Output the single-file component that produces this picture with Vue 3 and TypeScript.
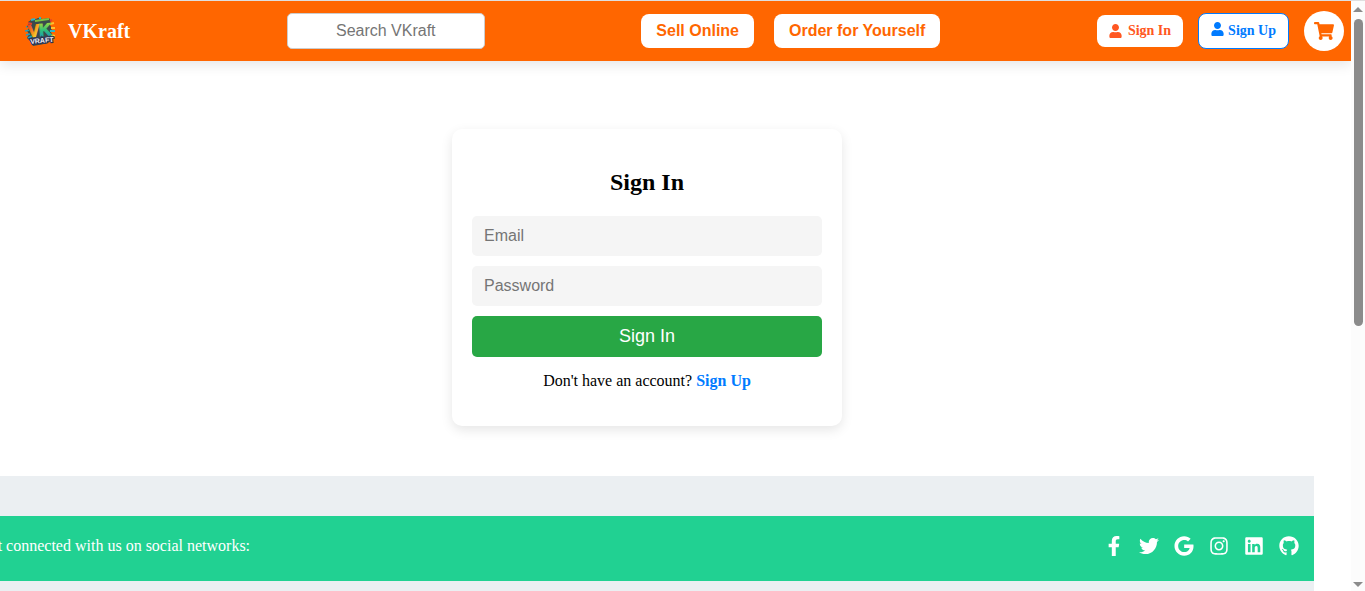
<script setup lang="ts">
import { ref } from 'vue'

interface SocialLink {
  name: string
  viewBox: string
  path: string
}

const search = ref('')
const email = ref('')
const password = ref('')

const userPath =
  'M224 256c70.7 0 128-57.3 128-128S294.7 0 224 0 96 57.3 96 128s57.3 128 128 128zm89.6 32h-16.7c-22.2 10.2-46.9 16-72.9 16s-50.6-5.8-72.9-16h-16.7C60.2 288 0 348.2 0 422.4V464c0 26.5 21.5 48 48 48h352c26.5 0 48-21.5 48-48v-41.6c0-74.2-60.2-134.4-134.4-134.4z'

const socials: SocialLink[] = [
  {
    name: 'Facebook',
    viewBox: '0 0 320 512',
    path: 'M279.14 288l14.22-92.66h-88.91v-60.13c0-25.35 12.42-50.06 52.24-50.06h40.42V6.26S260.43 0 225.36 0c-73.22 0-121.08 44.38-121.08 124.72v70.62H22.89V288h81.39v224h100.17V288z',
  },
  {
    name: 'Twitter',
    viewBox: '0 0 512 512',
    path: 'M459.37 151.716c.325 4.548.325 9.097.325 13.645 0 138.72-105.583 298.558-298.558 298.558-59.452 0-114.68-17.219-161.137-47.106 8.447.974 16.568 1.299 25.34 1.299 49.055 0 94.213-16.568 130.274-44.832-46.132-.975-84.792-31.188-98.112-72.772 6.498.974 12.995 1.624 19.818 1.624 9.421 0 18.843-1.3 27.614-3.573-48.081-9.747-84.143-51.98-84.143-102.985v-1.299c13.969 7.797 30.214 12.67 47.431 13.319-28.264-18.843-46.781-51.005-46.781-87.391 0-19.492 5.197-37.36 14.294-52.954 51.655 63.675 129.3 105.258 216.365 109.807-1.624-7.797-2.599-15.918-2.599-24.04 0-57.828 46.782-104.934 104.934-104.934 30.213 0 57.502 12.67 76.67 33.137 23.715-4.548 46.456-13.32 66.599-25.34-7.798 24.366-24.366 44.833-46.132 57.827 21.117-2.273 41.584-8.122 60.426-16.243-14.292 20.791-32.161 39.308-52.628 54.253z',
  },
  {
    name: 'Google',
    viewBox: '0 0 488 512',
    path: 'M488 261.8C488 403.3 391.1 504 248 504 110.8 504 0 393.2 0 256S110.8 8 248 8c66.8 0 123 24.5 166.3 64.9l-67.5 64.9C258.5 52.6 94.3 116.6 94.3 256c0 86.5 69.1 156.6 153.7 156.6 98.2 0 135-70.4 140.8-106.9H248v-85.3h236.1c2.3 12.7 3.9 24.9 3.9 41.4z',
  },
  {
    name: 'Instagram',
    viewBox: '0 0 448 512',
    path: 'M224.1 141c-63.6 0-114.9 51.3-114.9 114.9s51.3 114.9 114.9 114.9S339 319.5 339 255.9 287.7 141 224.1 141zm0 189.6c-41.1 0-74.7-33.5-74.7-74.7s33.5-74.7 74.7-74.7 74.7 33.5 74.7 74.7-33.6 74.7-74.7 74.7zm146.4-194.3c0 14.9-12 26.8-26.8 26.8-14.9 0-26.8-12-26.8-26.8s12-26.8 26.8-26.8 26.8 12 26.8 26.8zm76.1 27.2c-1.7-35.9-9.9-67.7-36.2-93.9-26.2-26.2-58-34.4-93.9-36.2-37-2.1-147.9-2.1-184.9 0-35.8 1.7-67.6 9.9-93.9 36.1s-34.4 58-36.2 93.9c-2.1 37-2.1 147.9 0 184.9 1.7 35.9 9.9 67.7 36.2 93.9s58 34.4 93.9 36.2c37 2.1 147.9 2.1 184.9 0 35.9-1.7 67.7-9.9 93.9-36.2 26.2-26.2 34.4-58 36.2-93.9 2.1-37 2.1-147.8 0-184.8zM398.8 388c-7.8 19.6-22.9 34.7-42.6 42.6-29.5 11.7-99.5 9-132.1 9s-102.7 2.6-132.1-9c-19.6-7.8-34.7-22.9-42.6-42.6-11.7-29.5-9-99.5-9-132.1s-2.6-102.7 9-132.1c7.8-19.6 22.9-34.7 42.6-42.6 29.5-11.7 99.5-9 132.1-9s102.7-2.6 132.1 9c19.6 7.8 34.7 22.9 42.6 42.6 11.7 29.5 9 99.5 9 132.1s2.7 102.7-9 132.1z',
  },
  {
    name: 'LinkedIn',
    viewBox: '0 0 448 512',
    path: 'M416 32H31.9C14.3 32 0 46.5 0 64.3v383.4C0 465.5 14.3 480 31.9 480H416c17.6 0 32-14.5 32-32.3V64.3c0-17.8-14.4-32.3-32-32.3zM135.4 416H69V202.2h66.5V416zm-33.2-243c-21.3 0-38.5-17.3-38.5-38.5S80.9 96 102.2 96c21.2 0 38.5 17.3 38.5 38.5 0 21.3-17.2 38.5-38.5 38.5zm282.1 243h-66.4V312c0-24.8-.5-56.7-34.5-56.7-34.6 0-39.9 27-39.9 54.9V416h-66.4V202.2h63.7v29.2h.9c8.9-16.8 30.6-34.5 62.9-34.5 67.2 0 79.7 44.3 79.7 101.9V416z',
  },
  {
    name: 'GitHub',
    viewBox: '0 0 496 512',
    path: 'M244.8 8C106.1 8 0 113.3 0 252c0 110.9 69.8 205.8 169.5 239.2 12.8 2.3 17.3-5.6 17.3-12.1 0-6.2-.3-40.4-.3-61.4 0 0-70 15-84.7-29.8 0 0-11.4-29.1-27.8-36.6 0 0-22.9-15.7 1.6-15.4 0 0 24.9 2 38.6 25.8 21.9 38.6 58.6 27.5 72.9 20.9 2.3-16 8.8-27.1 16-33.7-55.9-6.2-112.3-14.3-112.3-110.5 0-27.5 7.6-41.3 23.6-58.9-2.6-6.5-11.1-33.3 2.6-67.9 20.9-6.5 69 27 69 27 20-5.6 41.5-8.5 62.8-8.5s42.8 2.9 62.8 8.5c0 0 48.1-33.6 69-27 13.7 34.7 5.2 61.4 2.6 67.9 16 17.7 25.8 31.5 25.8 58.9 0 96.5-58.9 104.2-114.8 110.5 9.2 7.9 17 22.9 17 46.4 0 33.7-.3 75.4-.3 83.6 0 6.5 4.6 14.4 17.3 12.1C428.2 457.8 496 362.9 496 252 496 113.3 383.5 8 244.8 8z',
  },
]
</script>

<template>
  <div class="window">
    <div class="page">
      <header class="header">
        <a class="brand" href="#">
          <svg class="logo" viewBox="0 0 30 30" aria-hidden="true">
            <defs>
              <linearGradient id="v-fill" x1="0" y1="0" x2="1" y2="1">
                <stop offset="0" stop-color="#e8281c" />
                <stop offset="0.45" stop-color="#f98a1b" />
                <stop offset="0.7" stop-color="#f4d92c" />
                <stop offset="1" stop-color="#5cc653" />
              </linearGradient>
              <linearGradient id="k-fill" x1="0" y1="0" x2="0" y2="1">
                <stop offset="0" stop-color="#c6e02c" />
                <stop offset="0.5" stop-color="#2fc07a" />
                <stop offset="1" stop-color="#1593c9" />
              </linearGradient>
            </defs>
            <path d="M3 6l3-2 5-1 2-1 5 1 6-1 2 3-1 4 2 3-1 4 1 4-2 6-6 2-11 2-3-5-3-3 2-4-2-3 2-3z" fill="#3b4a4c" />
            <path d="M1 11l4-1M0 15l5-1M1 19l4-1M3 22l4-2" stroke="#1e9fc4" stroke-width="1.5" />
            <path d="M25 8l4-1M26 12l4 0M26 19l4 1" stroke="#ffc12e" stroke-width="2" />
            <path d="M25 15l5 0M6 4l4-1M14 2l2 0" stroke="#2bb5c9" stroke-width="2" />
            <path d="M10 5l14-2" stroke="#7fc241" stroke-width="2" />
            <path d="M3 7l4 1M25 5l2-1" stroke="#e5422b" stroke-width="2" />
            <g transform="rotate(-5 15 15)">
              <text class="logo-main" x="3" y="20" fill="url(#v-fill)" stroke="url(#v-fill)">V</text>
              <text class="logo-main" x="14" y="20" fill="url(#k-fill)" stroke="url(#k-fill)">K</text>
              <text class="logo-sub" x="16" y="27" text-anchor="middle">VRAFT</text>
            </g>
          </svg>
          <span>VKraft</span>
        </a>
        <input v-model="search" class="search" type="text" placeholder="Search VKraft" aria-label="Search VKraft" />
        <nav class="nav">
          <button type="button">Sell Online</button>
          <button type="button">Order for Yourself</button>
        </nav>
        <div class="actions">
          <a class="account sign-in" href="#">
            <svg class="user" viewBox="0 0 448 512" aria-hidden="true"><path :d="userPath" /></svg>
            <span>Sign In</span>
          </a>
          <a class="account sign-up" href="#">
            <svg class="user" viewBox="0 0 448 512" aria-hidden="true"><path :d="userPath" /></svg>
            <span>Sign Up</span>
          </a>
          <button class="cart" type="button" aria-label="Cart">
            <svg viewBox="0 0 576 512" aria-hidden="true">
              <path d="M528.12 301.319l47.273-208C578.806 78.301 567.391 64 551.99 64H159.208l-9.166-44.81C147.758 8.021 137.93 0 126.529 0H24C10.745 0 0 10.745 0 24v16c0 13.255 10.745 24 24 24h69.883l70.248 343.435C147.325 417.1 136 435.222 136 456c0 30.928 25.072 56 56 56s56-25.072 56-56c0-15.674-6.447-29.835-16.824-40h209.647C430.447 426.165 424 440.326 424 456c0 30.928 25.072 56 56 56s56-25.072 56-56c0-22.172-12.888-41.332-31.579-50.405l5.517-24.276c3.413-15.018-8.002-29.319-23.403-29.319H218.117l-6.545-32h293.145c11.206 0 20.92-7.754 23.403-18.681z" />
            </svg>
          </button>
        </div>
      </header>

      <div class="content">
        <main class="main">
          <form class="card" @submit.prevent>
            <h2>Sign In</h2>
            <div class="fields">
              <input v-model="email" type="email" placeholder="Email" aria-label="Email" />
              <input v-model="password" type="password" placeholder="Password" aria-label="Password" />
              <button type="submit">Sign In</button>
            </div>
            <p>Don't have an account? <a href="#">Sign Up</a></p>
          </form>
        </main>
        <footer class="footer">
          <section class="social">
            <span>Get connected with us on social networks:</span>
            <div class="social-links">
              <a v-for="item in socials" :key="item.name" href="#" :aria-label="item.name">
                <svg :viewBox="item.viewBox" aria-hidden="true"><path :d="item.path" /></svg>
              </a>
            </div>
          </section>
        </footer>
      </div>
    </div>

    <div class="scrollbar" aria-hidden="true">
      <span class="arrow up"></span>
      <span class="thumb"></span>
      <span class="arrow down"></span>
    </div>
  </div>
</template>

<style>
body {
  margin: 0;
  background: #fff;
}
</style>

<style scoped>
* {
  box-sizing: border-box;
}

.window {
  display: grid;
  grid-template-columns: minmax(0, 1fr) 14px;
  height: 100vh;
  overflow: hidden;
  border-top: 1px solid #dfdfdf;
  font-family: "Liberation Serif", "Times New Roman", serif;
  font-size: 16px;
  color: #000;
}

.page {
  display: flex;
  flex-direction: column;
  min-width: 0;
  overflow: hidden;
}

.header {
  display: flex;
  flex: none;
  align-items: center;
  justify-content: space-between;
  height: 60px;
  padding: 0 7px 0 25px;
  background: #ff6600;
  box-shadow: 0 4px 12px rgba(0, 0, 0, 0.1);
}

.brand {
  display: flex;
  align-items: center;
  gap: 13px;
  color: #fff;
  font-size: 20px;
  font-weight: 700;
  text-decoration: none;
}

.logo {
  width: 30px;
  height: 30px;
}

.logo-main {
  font: 900 17px "Liberation Sans", Arial, sans-serif;
  stroke-width: 1;
}

.logo-sub {
  font: 700 7px "Liberation Sans", Arial, sans-serif;
  fill: #f1eff2;
  stroke: #2b3357;
  stroke-width: 2;
  paint-order: stroke;
}

.search {
  width: 198px;
  height: 36px;
  padding: 0 10px;
  border: 1px solid #ccc;
  border-radius: 5px;
  background: #fff;
  font-family: "Liberation Sans", Arial, sans-serif;
  font-size: 16px;
  text-align: center;
  outline: none;
}

.nav {
  display: flex;
  gap: 20px;
}

.nav button {
  height: 34px;
  padding: 0 15px;
  border: 0;
  border-radius: 8px;
  background: #fff;
  color: #ff6600;
  font-family: "Liberation Sans", Arial, sans-serif;
  font-size: 16px;
  font-weight: 700;
}

.actions {
  display: flex;
  align-items: center;
  gap: 15px;
}

.account {
  display: flex;
  align-items: center;
  border-radius: 8px;
  background: #fff;
  font-size: 14px;
  font-weight: 700;
  text-decoration: none;
}

.sign-in {
  gap: 6px;
  height: 32px;
  padding: 0 12px;
  color: #ff5722;
}

.sign-up {
  gap: 4px;
  height: 36px;
  padding: 0 12px;
  border: 1px solid #007bff;
  color: #007bff;
}

.user {
  width: 13px;
  height: 14px;
  fill: currentColor;
}

.sign-up .user {
  margin-bottom: 4px;
}

.cart {
  display: grid;
  place-items: center;
  width: 40px;
  height: 40px;
  padding: 0;
  border: 0;
  border-radius: 50%;
  background: #fff;
  color: #ff6600;
}

.cart svg {
  width: 20px;
  height: 18px;
  fill: currentColor;
}

.content {
  margin-right: 37px;
}

.main {
  display: flex;
  justify-content: center;
  padding: 68px 20px 50px 0;
}

.card {
  width: 390px;
  padding: 20px;
  border-radius: 10px;
  background: #fff;
  box-shadow: 0 4px 12px rgba(0, 0, 0, 0.1);
  text-align: center;
}

.card h2 {
  margin: 20px 0;
  font-size: 24px;
  line-height: 27px;
}

.fields {
  display: grid;
  gap: 10px;
}

.fields input {
  width: 100%;
  height: 40px;
  padding: 0 12px;
  border: 0;
  border-radius: 5px;
  background: #f5f5f5;
  font-family: "Liberation Sans", Arial, sans-serif;
  font-size: 16px;
  outline: none;
}

.search::placeholder,
.fields input::placeholder {
  color: #757575;
}

.fields button {
  height: 41px;
  border: 0;
  border-radius: 5px;
  background: #28a745;
  color: #fff;
  font-family: "Liberation Sans", Arial, sans-serif;
  font-size: 18px;
}

.card p {
  margin: 15px 0 16px;
  line-height: 18px;
}

.card p a {
  color: #007bff;
  font-weight: 700;
  text-decoration: none;
}

.footer {
  margin-left: -37px;
  padding: 40px 0;
  background: #ebeff2;
}

.social {
  display: flex;
  align-items: center;
  justify-content: space-between;
  height: 65px;
  padding: 0 15px 6px 16px;
  background: #21d192;
  color: #fff;
}

.social-links {
  display: flex;
  gap: 15px;
}

.social-links a {
  display: grid;
  place-items: center;
  width: 20px;
  height: 20px;
  color: #fff;
}

.social-links svg {
  width: 20px;
  height: 20px;
  fill: currentColor;
}

.scrollbar {
  display: flex;
  flex-direction: column;
  align-items: center;
  padding: 6px 0 4px;
  background: #fcfcfc;
}

.arrow {
  border: 5px solid transparent;
}

.up {
  border-top: 0;
  border-bottom-color: #8b8b8b;
}

.down {
  margin-top: auto;
  border-bottom: 0;
  border-top-color: #8b8b8b;
}

.thumb {
  width: 9px;
  height: 53%;
  margin-top: 7px;
  border-radius: 5px;
  background: #8b8b8b;
}
</style>
